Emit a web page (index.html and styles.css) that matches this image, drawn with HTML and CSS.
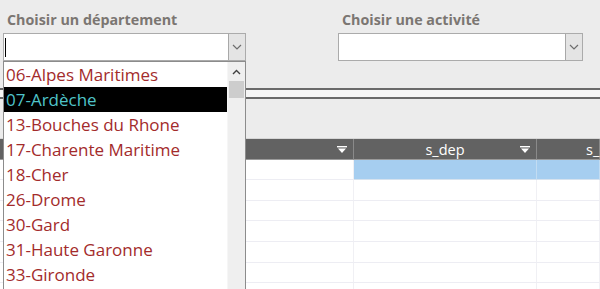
FILE: index.html
```html
<!DOCTYPE html>
<html>
<head>
    <title>Filtrer par département</title>
    <link rel="stylesheet" href="styles.css">
</head>
<body>
    <div class="top">
        <div class="field field-dep">
            <div class="label">Choisir un département</div>
            <div class="combo">
                <div class="combo-text"><span class="caret"></span></div>
                <div class="combo-btn">
                    <svg width="10" height="6" viewBox="0 0 10 6"><path d="M1 1 L5 5 L9 1" fill="none" stroke="#6d6d6d" stroke-width="1.2"/></svg>
                </div>
            </div>
        </div>
        <div class="field field-act">
            <div class="label">Choisir une activité</div>
            <div class="combo">
                <div class="combo-text"></div>
                <div class="combo-btn">
                    <svg width="10" height="6" viewBox="0 0 10 6"><path d="M1 1 L5 5 L9 1" fill="none" stroke="#6d6d6d" stroke-width="1.2"/></svg>
                </div>
            </div>
        </div>
    </div>

    <div class="rule"></div>

    <div class="sheet">
        <div class="bar"></div>
        <div class="grid">
            <div class="head"><span></span><svg class="tri" width="10" height="7" viewBox="0 0 10 7"><rect x="0" y="0" width="10" height="1.4" fill="#fff"/><path d="M1 2.5 L9 2.5 L5 7 Z" fill="#fff"/></svg></div>
            <div class="head"><span>s_dep</span><svg class="tri" width="10" height="7" viewBox="0 0 10 7"><rect x="0" y="0" width="10" height="1.4" fill="#fff"/><path d="M1 2.5 L9 2.5 L5 7 Z" fill="#fff"/></svg></div>
            <div class="head head-last"><span>s_</span></div>

            <div class="cell"></div>
            <div class="cell sel"></div>
            <div class="cell sel"></div>

            <div class="cell"></div><div class="cell"></div><div class="cell"></div>
            <div class="cell"></div><div class="cell"></div><div class="cell"></div>
            <div class="cell"></div><div class="cell"></div><div class="cell"></div>
            <div class="cell"></div><div class="cell"></div><div class="cell"></div>
            <div class="cell"></div><div class="cell"></div><div class="cell"></div>
            <div class="cell"></div><div class="cell"></div><div class="cell"></div>
        </div>
    </div>

    <!-- liste déroulante ouverte, par-dessus la feuille -->
    <div class="dropdown">
        <ul class="items">
            <li>06-Alpes Maritimes</li>
            <li class="active">07-Ardèche</li>
            <li>13-Bouches du Rhone</li>
            <li>17-Charente Maritime</li>
            <li>18-Cher</li>
            <li>26-Drome</li>
            <li>30-Gard</li>
            <li>31-Haute Garonne</li>
            <li>33-Gironde</li>
        </ul>
        <div class="scroll">
            <div class="scroll-up">
                <svg width="9" height="6" viewBox="0 0 9 6"><path d="M1 5 L4.5 1.5 L8 5" fill="none" stroke="#404040" stroke-width="1.4"/></svg>
            </div>
            <div class="thumb"></div>
        </div>
    </div>
</body>
</html>
```

FILE: styles.css
```css
body {
    margin: 0;
    background-color: #ececec;
    font-family: "Open Sans", "Noto Sans", sans-serif;
    position: relative;
    height: 289px;
    overflow: hidden;
}

.top {
    display: flex;
    height: 88px;
    padding-left: 3px;
    gap: 92px;
}

.field-dep {
    width: 243px;
}

.field-act {
    width: 245px;
}

.label {
    font-weight: 700;
    font-size: 14.3px;
    color: #7b7672;
    padding: 10px 0 0 4px;
    height: 23px;
}

.combo {
    display: flex;
    height: 28px;
    border: 1px solid #ababab;
    background-color: #fff;
    box-sizing: border-box;
}

.combo-text {
    flex: 1;
}

.caret {
    display: block;
    width: 1px;
    height: 19px;
    margin: 4px 0 0 1px;
    background-color: #000;
}

.combo-btn {
    width: 16px;
    border-left: 1px solid #a8a8a8;
    background-color: #e4e4e4;
    display: flex;
    align-items: center;
    justify-content: center;
}

.rule {
    height: 7px;
    border-top: 2px solid #6a6a6a;
    border-bottom: 2px solid #6a6a6a;
    background-color: #f6f6f6;
}

.bar {
    height: 39px;
    border-bottom: 1px solid #d6d6d6;
}

.grid {
    display: grid;
    grid-template-columns: 354px 183px 1fr;
    grid-auto-rows: 20.6px;
    background-color: #fff;
}

.head {
    background-color: #626262;
    border-right: 1px solid #8a8a8a;
    border-bottom: 1px solid #9a9a9a;
    color: #fff;
    font-size: 14.5px;
    display: flex;
    align-items: center;
    justify-content: center;
    position: relative;
    height: 21px;
    box-sizing: border-box;
}

.head-last span {
    margin-right: auto;
    padding-left: 49px;
}

.tri {
    position: absolute;
    right: 6px;
    top: 7px;
}

.cell {
    border-right: 1px solid #f0f0f4;
    border-bottom: 1px solid #ededf3;
    box-sizing: border-box;
}

.sel {
    background-color: #a6cef0;
    border-right-color: #c2dcf2;
    border-bottom-color: #d6e2ee;
}

.dropdown {
    position: absolute;
    left: 3px;
    top: 61px;
    width: 243px;
    height: 230px;
    border: 1px solid #8c8c8c;
    border-bottom: none;
    background-color: #fff;
    box-sizing: border-box;
    display: flex;
}

.items {
    flex: 1;
    list-style: none;
    margin: 0;
    padding: 0;
}

.items li {
    height: 25px;
    line-height: 25px;
    padding-left: 2px;
    font-size: 17px;
    color: #a32b2b;
    white-space: nowrap;
}

.items li.active {
    background-color: #000;
    color: #4fc3c9;
}

.scroll {
    width: 17px;
    background-color: #efefef;
    border-left: 1px solid #f6f6f6;
}

.scroll-up {
    height: 19px;
    display: flex;
    align-items: center;
    justify-content: center;
}

.thumb {
    height: 17px;
    margin: 0 1px;
    background-color: #cdcdcd;
}
```
